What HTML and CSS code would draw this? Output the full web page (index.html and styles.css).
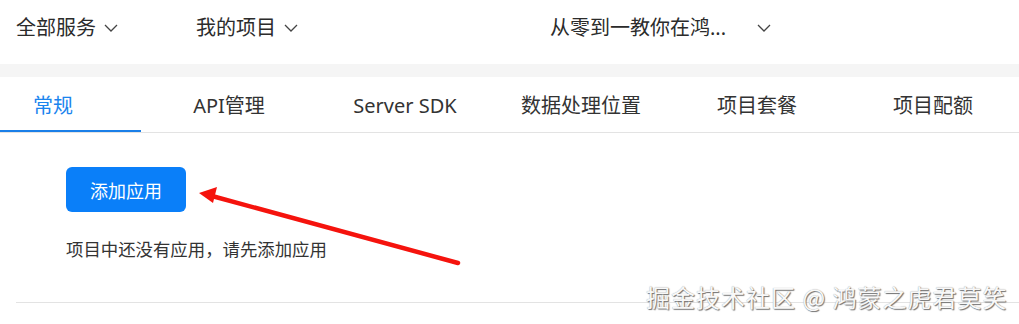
FILE: index.html
```html
<!DOCTYPE html>
<html lang="zh-CN">
<head>
<meta charset="utf-8">
<link rel="stylesheet" href="styles.css">
</head>
<body>
<div class="page">
  <header class="topnav">
    <div class="nav-item nav-services"><span>全部服务</span><svg class="chev" viewBox="0 0 14 8"><polyline points="1,1 7,7 13,1"/></svg></div>
    <div class="nav-item nav-projects"><span>我的项目</span><svg class="chev" viewBox="0 0 14 8"><polyline points="1,1 7,7 13,1"/></svg></div>
    <div class="nav-item nav-current"><span class="current-name">从零到一教你在鸿...</span><svg class="chev" viewBox="0 0 14 8"><polyline points="1,1 7,7 13,1"/></svg></div>
  </header>
  <div class="band"></div>
  <nav class="tabs">
    <div class="tab-strip">
      <div class="tab active">常规</div>
      <div class="tab">API管理</div>
      <div class="tab">Server SDK</div>
      <div class="tab">数据处理位置</div>
      <div class="tab">项目套餐</div>
      <div class="tab">项目配额</div>
    </div>
  </nav>
  <main class="content">
    <button class="btn-primary">添加应用</button>
    <p class="empty">项目中还没有应用，请先添加应用</p>
  </main>
  <svg class="arrow" viewBox="0 0 1019 324" width="1019" height="324">
    <line x1="458" y1="263" x2="212" y2="196" stroke="#f5130d" stroke-width="4.5" stroke-linecap="round"/>
    <polygon points="199,193 217,187 213,203" fill="#f5130d"/>
  </svg>
  <div class="watermark">掘金技术社区 @ 鸿蒙之虎君莫笑</div>
</div>
</body>
</html>
```

FILE: styles.css
```css
html, body {
  margin: 0;
  padding: 0;
  background: #fff;
}
body {
  font-family: "Noto Sans", "Noto Sans CJK SC", sans-serif;
  color: #333;
}
.page {
  position: relative;
  width: 1019px;
  height: 324px;
  overflow: hidden;
}
.topnav {
  height: 64px;
  box-sizing: border-box;
  display: flex;
  align-items: center;
  padding: 0 0 9px 16px;
  font-size: 20px;
  color: #2b2b2b;
}
.nav-item {
  display: flex;
  align-items: center;
  gap: 8px;
  line-height: 28px;
}
.nav-services { width: 180px; }
.nav-projects { width: 354px; }
.current-name {
  width: 199px;
}
.chev {
  width: 14px;
  height: 8px;
  fill: none;
  stroke: #444;
  stroke-width: 1.3;
  margin-top: 1px;
}
.band {
  height: 13px;
  background: #f5f5f5;
}
.tabs {
  height: 56px;
  border-bottom: 1px solid #e3e3e3;
  box-sizing: border-box;
  overflow: hidden;
}
.tab-strip {
  display: flex;
  margin-left: -35px;
  height: 100%;
}
.tab {
  flex: 0 0 176px;
  text-align: center;
  font-size: 20px;
  line-height: 51px;
  padding-top: 3px;
  color: #333;
  box-sizing: border-box;
  border-bottom: 2px solid transparent;
}
.tab.active {
  color: #1a84ee;
  border-bottom-color: #1a7fe8;
}
.content {
  margin-left: 16px;
  padding: 34px 0 0 50px;
  height: 135px;
  border-bottom: 1px solid #e3e3e3;
}
.btn-primary {
  display: block;
  width: 120px;
  height: 45px;
  border: none;
  border-radius: 6px;
  background: #0a7ff9;
  color: #fff;
  font-family: "Noto Sans CJK SC", sans-serif;
  font-size: 18px;
  padding: 0;
}
.empty {
  margin: 25px 0 0;
  font-family: "Noto Sans CJK SC", sans-serif;
  font-size: 17.4px;
  line-height: 24px;
  color: #333;
}
.arrow {
  position: absolute;
  left: 0;
  top: 0;
  pointer-events: none;
}
.watermark {
  position: absolute;
  left: 646px;
  top: 280px;
  font-family: "Noto Sans CJK SC", sans-serif;
  font-size: 24px;
  letter-spacing: 1px;
  line-height: 34px;
  color: #f8f8f8;
  text-shadow: 1px 1px 1px #6f6f6f, 0 0 1px #999;
  white-space: nowrap;
}
```
